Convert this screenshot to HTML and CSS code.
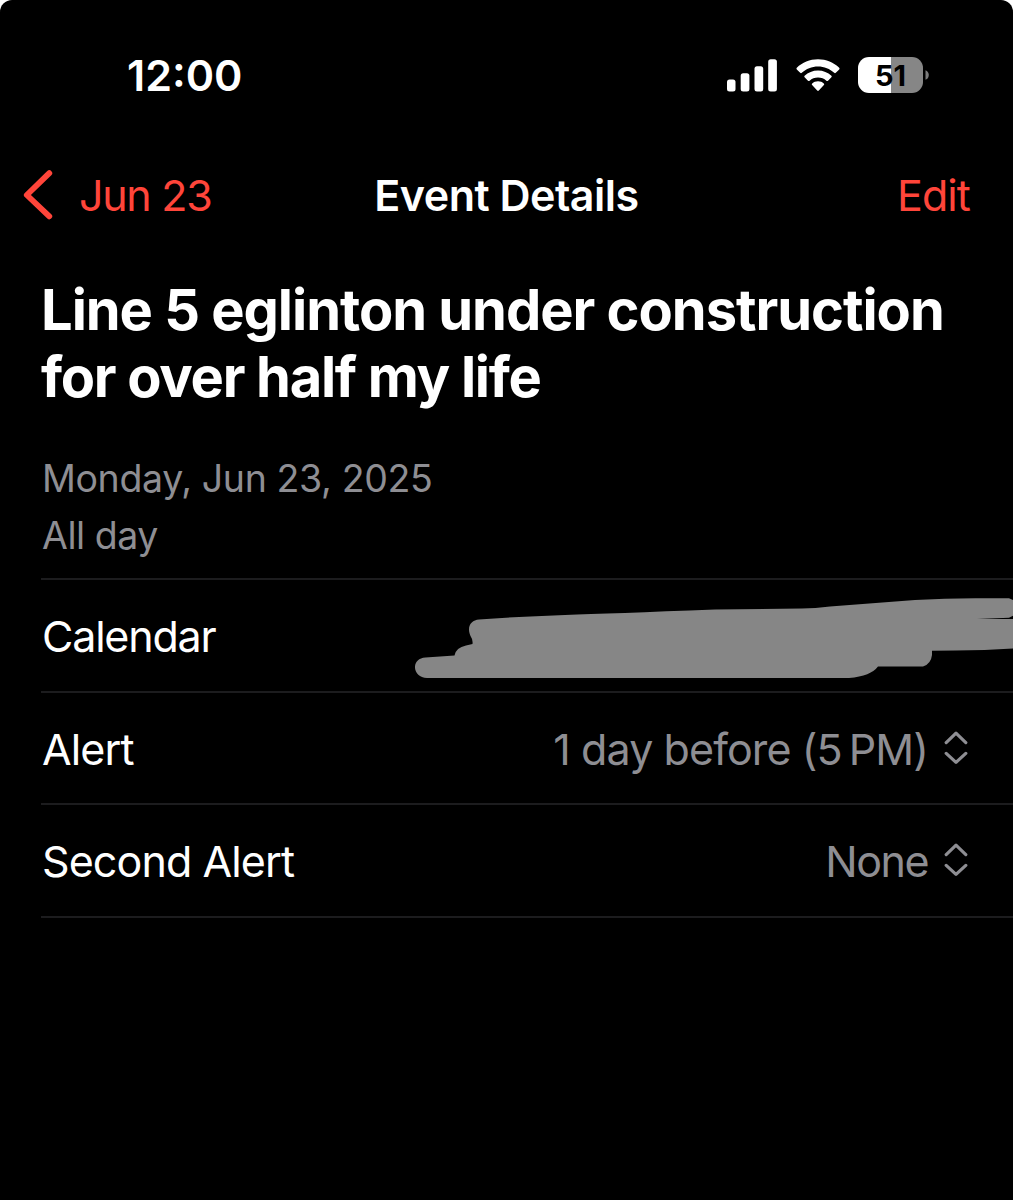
FILE: index.html
```html
<!DOCTYPE html>
<html lang="en">
<head>
    <meta charset="UTF-8">
    <meta name="viewport" content="width=device-width, initial-scale=1.0">
    <title>Event Details</title>
    <link rel="stylesheet" href="styles.css">
</head>
<body>

    <div class="screen">
        <div class="status-bar">
            <span class="clock">12:00</span>
            <div class="status-icons">
                <svg class="signal" width="50" height="33" viewBox="0 0 50 33" fill="#fff">
                    <rect x="0" y="20.5" width="8.5" height="12" rx="2.5"/>
                    <rect x="13.7" y="14.3" width="8.7" height="18.2" rx="2.5"/>
                    <rect x="27.5" y="7.3" width="8.7" height="25.2" rx="2.5"/>
                    <rect x="41.2" y="0.3" width="8.7" height="32.2" rx="2.5"/>
                </svg>
                <svg class="wifi" width="44" height="33" viewBox="0 0 44 33" fill="#fff">
                    <path d="M22 0.3C30.2 0.3 37.7 3.5 43.2 8.8Q44 9.6 43.2 10.4L39.8 13.8Q39 14.5 38.2 13.8C33.9 9.8 28.2 7.4 22 7.4S10.1 9.8 5.8 13.8Q5 14.5 4.2 13.8L0.8 10.4Q0 9.6 0.8 8.8C6.3 3.5 13.8 0.3 22 0.3Z"/>
                    <path d="M22 11.4C27.2 11.4 31.9 13.4 35.4 16.7Q36.2 17.5 35.4 18.3L32 21.7Q31.2 22.4 30.4 21.7C28.2 19.7 25.2 18.5 22 18.5S15.8 19.7 13.6 21.7Q12.8 22.4 12 21.7L8.6 18.3Q7.8 17.5 8.6 16.7C12.1 13.4 16.8 11.4 22 11.4Z"/>
                    <path d="M22 22.3C24.3 22.3 26.3 23.1 27.8 24.5Q28.7 25.3 27.9 26.1L22.8 31.6Q22 32.4 21.2 31.6L16.1 26.1Q15.3 25.3 16.2 24.5C17.7 23.1 19.7 22.3 22 22.3Z"/>
                </svg>
                <div class="battery">
                    <div class="battery-body"><span>51</span></div>
                    <svg width="5" height="12" viewBox="0 0 5 12" fill="#7c7c7c">
                        <path d="M0.5 1.2Q3.8 2.6 3.8 6T0.5 10.8Z"/>
                    </svg>
                </div>
            </div>
        </div>

        <div class="nav-bar">
            <div class="back">
                <svg width="30" height="50" viewBox="0 0 30 50" fill="none" stroke="#ff453a" stroke-width="5.8" stroke-linecap="round" stroke-linejoin="round">
                    <path d="M26.3 3.2L3.8 25L26.3 46.3"/>
                </svg>
                <span class="back-label">Jun 23</span>
            </div>
            <div class="nav-title">Event Details</div>
            <div class="edit">Edit</div>
        </div>

        <h1 class="event-title"><span class="line-one">Line 5 eglinton under construction</span><br><span class="line-two">for over half my life</span></h1>

        <div class="event-date">
            <div class="date">Monday, Jun 23, 2025</div>
            <div class="all-day">All day</div>
        </div>

        <div class="rows">
            <div class="row">
                <span class="calendar">Calendar</span>
                <svg class="scribble" width="598" height="82" viewBox="0 0 598 82" fill="#868686">
                    <path d="M10.5 59.5L39.5 57.5Q41 49.5 51 47.5L57.5 46Q58 41.5 56 39C51 29 56 22 64 21.5Q105 18.5 150 17T300 11.5L387 10.5Q400 10.5 415 8.5L500 2Q530 0.3 560 0.2H594L598 2V17.8L594 19.8L562 21H598V50.5Q570 52.5 540 52.5L517 52.7V57Q516 66 508 68.5H463Q456 78 434 80H12C-3 79.5 -4.5 60.5 10.5 59.5Z"/>
                </svg>
            </div>
            <div class="row">
                <span class="alert">Alert</span>
                <div class="picker">
                    <span class="alert-value">1 day before (5&#8239;PM)</span>
                    <svg class="chevrons" width="24" height="34" viewBox="0 0 24 34" fill="none" stroke="#8e8e93" stroke-width="3.2" stroke-linecap="round" stroke-linejoin="round">
                        <path d="M2.2 11.6L12 2.2L21.8 11.6M2.2 22.4L12 31.4L21.8 22.4"/>
                    </svg>
                </div>
            </div>
            <div class="row">
                <span class="second-alert">Second Alert</span>
                <div class="picker">
                    <span class="none-value">None</span>
                    <svg class="chevrons" width="24" height="34" viewBox="0 0 24 34" fill="none" stroke="#8e8e93" stroke-width="3.2" stroke-linecap="round" stroke-linejoin="round">
                        <path d="M2.2 11.6L12 2.2L21.8 11.6M2.2 22.4L12 31.4L21.8 22.4"/>
                    </svg>
                </div>
            </div>
        </div>
    </div>

</body>
</html>
```
FILE: styles.css
```css
* {
    box-sizing: border-box;
}
body {
    font-family: Inter, "Liberation Sans", sans-serif;
    font-size: 43px;
    margin: 0;
    background: #fff;
    color: #fff;
}
svg {
    display: block;
    flex-shrink: 0;
}
.screen {
    height: 1200px;
    background: #000;
    border-radius: 12px 12px 0 0;
    overflow: hidden;
    white-space: nowrap;
}
.status-bar {
    display: flex;
    align-items: center;
    justify-content: space-between;
    height: 150px;
    padding: 0 83px 0 127px;
}
.clock {
    font-weight: 600;
}
.status-icons {
    display: flex;
    align-items: center;
}
.wifi {
    margin: 0 18px 0 19px;
}
.battery {
    display: flex;
    align-items: center;
    gap: 2px;
}
.battery-body {
    width: 65px;
    height: 36px;
    border-radius: 11px;
    background: linear-gradient(to right, #fff 33px, #868686 33px);
    color: #000;
    font-size: 29px;
    font-weight: 700;
    line-height: 37px;
    text-align: center;
}
.nav-bar {
    display: grid;
    grid-template-columns: 1fr auto 1fr;
    align-items: center;
    height: 89px;
    color: #ff453a;
}
.back {
    display: flex;
    align-items: center;
    gap: 26px;
    padding-left: 23px;
}
.back-label {
    letter-spacing: -1.3px;
}
.nav-title {
    color: #fff;
    font-weight: 600;
    letter-spacing: -0.5px;
}
.edit {
    padding-right: 43px;
    letter-spacing: -0.9px;
    text-align: right;
}
.event-title {
    margin: 38px 0 0 41px;
    font-size: 56px;
    font-weight: 700;
    line-height: 67px;
}
.line-one {
    letter-spacing: -1.03px;
}
.line-two {
    letter-spacing: -1.3px;
}
.event-date {
    margin: 39px 0 0 42px;
    color: #8e8e93;
    font-size: 37.5px;
    line-height: 57px;
}
.date {
    letter-spacing: -0.37px;
}
.all-day {
    letter-spacing: -0.45px;
}
.rows {
    margin: 14px 0 0 41px;
    border-top: 2px solid #1c1c1e;
}
.row {
    display: flex;
    align-items: center;
    justify-content: space-between;
    height: 112.6px;
    padding: 2px 0 0 1px;
    border-bottom: 2px solid #1c1c1e;
}
.calendar {
    letter-spacing: -1.2px;
}
.alert,
.second-alert {
    letter-spacing: -0.9px;
}
.scribble {
    margin-top: 5px;
}
.picker {
    display: flex;
    align-items: center;
    gap: 16px;
    padding-right: 45px;
    color: #8e8e93;
}
.alert-value {
    letter-spacing: -0.9px;
}
.none-value {
    letter-spacing: -1.5px;
}
.chevrons {
    margin-bottom: 2px;
}
```
